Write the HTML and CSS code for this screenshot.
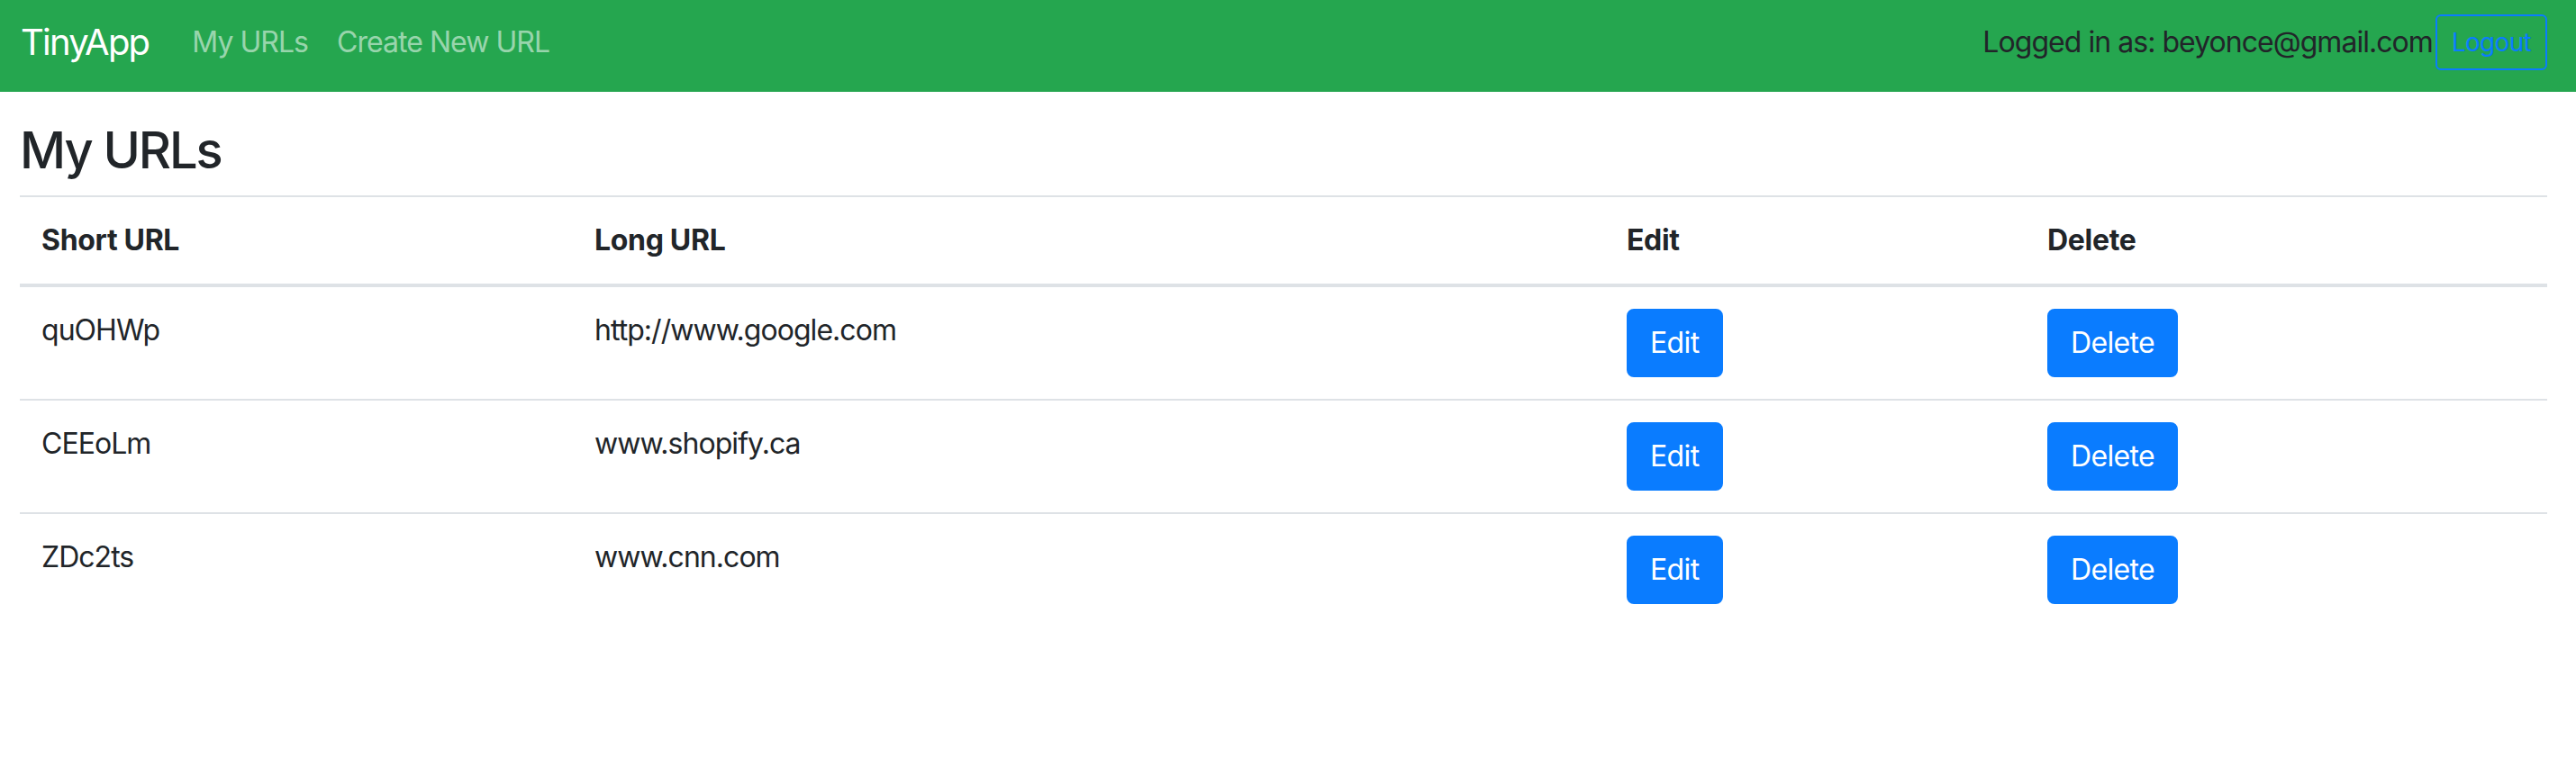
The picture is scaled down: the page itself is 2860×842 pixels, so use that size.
FILE: index.html
```html
<!DOCTYPE html>
<html lang="en">
<head>
<meta charset="utf-8">
<title>TinyApp</title>
<link rel="stylesheet" href="styles.css">
</head>
<body>
<nav class="navbar">
  <a class="brand" href="#">TinyApp</a>
  <div class="nav-links">
    <a class="nav-link" href="#">My URLs</a>
    <a class="nav-link" href="#">Create New URL</a>
  </div>
  <div class="nav-right">
    <span class="login-text">Logged in as: beyonce@gmail.com</span>
    <button class="btn-logout">Logout</button>
  </div>
</nav>
<main class="content">
  <h1 class="title">My URLs</h1>
  <table class="url-table">
    <thead>
      <tr>
        <th class="col-short">Short URL</th>
        <th class="col-long">Long URL</th>
        <th class="col-edit">Edit</th>
        <th class="col-delete">Delete</th>
      </tr>
    </thead>
    <tbody>
      <tr>
        <td>quOHWp</td>
        <td>http://www.google.com</td>
        <td><button class="btn">Edit</button></td>
        <td><button class="btn">Delete</button></td>
      </tr>
      <tr>
        <td>CEEoLm</td>
        <td>www.shopify.ca</td>
        <td><button class="btn">Edit</button></td>
        <td><button class="btn">Delete</button></td>
      </tr>
      <tr>
        <td>ZDc2ts</td>
        <td>www.cnn.com</td>
        <td><button class="btn">Edit</button></td>
        <td><button class="btn">Delete</button></td>
      </tr>
    </tbody>
  </table>
</main>
</body>
</html>
```

FILE: styles.css
```css
* { box-sizing: border-box; }
html, body { margin: 0; padding: 0; }
body {
  font-family: Inter, "Noto Sans", "Liberation Sans", sans-serif;
  font-size: 32px;
  line-height: 1.5;
  letter-spacing: -0.03em;
  color: #212529;
  background: #fff;
}
.navbar {
  display: flex;
  align-items: center;
  height: 102px;
  padding: 0 32px 9px 23px;
  background: #25a64f;
}
.brand {
  font-size: 40px;
  letter-spacing: -0.045em;
  color: #fff;
  text-decoration: none;
  margin-right: 32px;
  line-height: 1.5;
}
.nav-links { display: flex; }
.nav-link {
  color: rgba(255, 255, 255, 0.55);
  text-decoration: none;
  padding: 0 16px;
}
.nav-right {
  margin-left: auto;
  display: flex;
  align-items: center;
}
.login-text { color: #212529; }
.btn-logout {
  font-family: inherit;
  font-size: 28px;
  letter-spacing: -0.025em;
  line-height: 1.5;
  padding: 8px 16px;
  border: 2px solid #0a7cff;
  border-radius: 6px;
  color: #0a7cff;
  background: transparent;
  margin-left: 3px;
}
.content {
  padding: 32px 32px 0 22px;
}
.title {
  font-size: 56px;
  font-weight: 500;
  letter-spacing: -0.037em;
  line-height: 1.2;
  margin: 0 0 16px 0;
}
.url-table {
  width: 100%;
  border-collapse: collapse;
  table-layout: fixed;
}
.url-table th,
.url-table td {
  text-align: left;
  vertical-align: top;
  padding: 24px;
  border-top: 2px solid #dee2e6;
}
.url-table th {
  font-weight: 700;
  letter-spacing: -0.01em;
  border-bottom: 4px solid #dee2e6;
}
.col-short { width: 614px; }
.col-long { width: 1146px; }
.col-edit { width: 467px; }
.col-delete { width: auto; }
.btn {
  font-family: inherit;
  font-size: 32px;
  letter-spacing: -0.02em;
  line-height: 1.5;
  padding: 12px 24px;
  border: 2px solid #0a7cff;
  border-radius: 8px;
  background: #0a7cff;
  color: #fff;
  display: block;
}
```
